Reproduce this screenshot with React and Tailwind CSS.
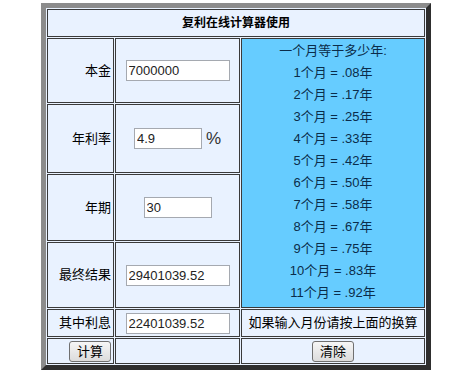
const months = ['.08', '.17', '.25', '.33', '.42', '.50', '.58', '.67', '.75', '.83', '.92'];

const cell = 'border border-[#3a3a3a] bg-[#e9f2ff]';
const label = `${cell} flex items-center justify-end pr-[2px]`;
const input = 'h-[21px] border border-[#a5a9b0] bg-white pl-[2px] text-[13px] text-[#222] outline-none';
const button =
  'h-[21px] w-[42px] rounded-[3px] border border-[#707070] bg-linear-to-b from-[#f6f6f6] to-[#dcdcdc] text-[13px] text-black';

export default function App() {
  return (
    <div className="pt-[3px] pl-[41px] font-['Liberation_Sans','Noto_Sans_CJK_SC',sans-serif] text-[13px] text-black">
      <div className="w-fit border-[5px] border-t-[#8c8c8c] border-l-[#8c8c8c] border-r-[#2e2e2e] border-b-[#2e2e2e] bg-[#e9f2ff] p-px">
        <div className="grid grid-cols-[67px_125px_184px] grid-rows-[28px_65px_69px_67px_66px_28px_26px] gap-px">
          <div className={`${cell} col-span-3 flex items-center justify-center text-[12px] font-bold`}>
            复利在线计算器使用
          </div>

          <div className={label}>本金</div>
          <div className={`${cell} flex items-center justify-center`}>
            <input className={`${input} w-[104px]`} defaultValue="7000000" />
          </div>
          <div className="row-span-4 flex flex-col items-center border border-[#3a3a3a] bg-[#66ccff] pt-px leading-[22px] text-[#0b2c4a]">
            <div>一个月等于多少年:</div>
            {months.map((m, i) => (
              <div key={m}>
                {i + 1}个月 = {m}年
              </div>
            ))}
          </div>

          <div className={label}>年利率</div>
          <div className={`${cell} flex items-center justify-center`}>
            <input className={`${input} w-[68px]`} defaultValue="4.9" />
            <span className="ml-[4px] text-[17px] leading-none text-[#333]">%</span>
          </div>

          <div className={label}>年期</div>
          <div className={`${cell} flex items-center justify-center`}>
            <input className={`${input} w-[68px]`} defaultValue="30" />
          </div>

          <div className={label}>最终结果</div>
          <div className={`${cell} flex items-center justify-center`}>
            <input className={`${input} w-[104px]`} defaultValue="29401039.52" />
          </div>

          <div className={label}>其中利息</div>
          <div className={`${cell} flex items-center justify-center`}>
            <input className={`${input} w-[104px] border-[#7aaee0]`} defaultValue="22401039.52" />
          </div>
          <div className={`${cell} flex items-center justify-center`}>如果输入月份请按上面的换算</div>

          <div className={label}>
            <button className={button}>计算</button>
          </div>
          <div className={cell}></div>
          <div className={`${cell} flex items-center justify-center`}>
            <button className={button}>清除</button>
          </div>
        </div>
      </div>
    </div>
  );
}
